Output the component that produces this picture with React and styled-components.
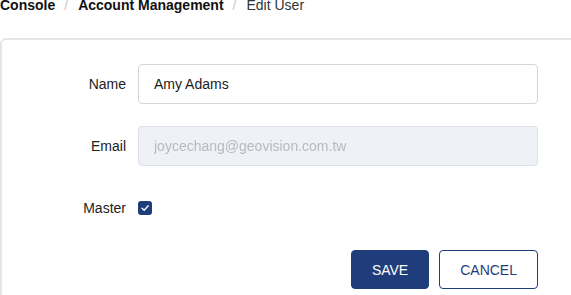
import React, { useState } from 'react';
import styled, { createGlobalStyle } from 'styled-components';

const GlobalStyle = createGlobalStyle`
	html, body {
		margin: 0;
		padding: 0;
		overflow: hidden;
		background: #fff;
	}
	body {
		font-family: 'Liberation Sans', Arial, sans-serif;
		color: #222;
	}
`;

const Page = styled.div`
	width: 571px;
	height: 295px;
	overflow: hidden;
`;

const Breadcrumb = styled.nav`
	display: flex;
	align-items: baseline;
	font-size: 14px;
	line-height: 16px;
	margin-top: -3px;
	height: 16px;
`;

const Crumb = styled.span`
	font-weight: ${p => (p.$current ? 400 : 700)};
	color: ${p => (p.$current ? '#333' : '#111')};
`;

const Sep = styled.span`
	color: #c8c8c8;
	margin: 0 10px 0 9px;
`;

const Card = styled.section`
	margin-top: 25px;
	margin-right: -40px;
	border: 2px solid #e6e6e6;
	border-radius: 6px;
	padding: 24px 0 40px 0;
`;

const Form = styled.form`
	display: grid;
	grid-template-columns: 124px 400px;
	column-gap: 12px;
	row-gap: 22px;
	align-items: center;
`;

const Label = styled.label`
	font-size: 14px;
	color: #222;
	text-align: right;
`;

const Input = styled.input`
	box-sizing: border-box;
	height: 40px;
	width: 100%;
	padding: 0 15px;
	font: 14px 'Liberation Sans', Arial, sans-serif;
	color: #1a1a1a;
	border: 1px solid ${p => (p.disabled ? '#dcdfe6' : '#d2d5dc')};
	border-radius: 4px;
	background: ${p => (p.disabled ? '#eef1f6' : '#fff')};
	outline: none;
	&:disabled {
		color: #b6bac2;
		-webkit-text-fill-color: #b6bac2;
		filter: blur(0.3px);
	}
`;

const CheckCell = styled.div`
	height: 40px;
	display: flex;
	align-items: center;
`;

const Check = styled.span`
	width: 14px;
	height: 14px;
	border-radius: 3px;
	background: #1f3d7a;
	display: flex;
	align-items: center;
	justify-content: center;
	cursor: pointer;
`;

const Actions = styled.div`
	grid-column: 2;
	display: flex;
	justify-content: flex-end;
	gap: 10px;
`;

const Button = styled.button`
	box-sizing: border-box;
	height: 39px;
	padding: 0 20px;
	border-radius: 4px;
	border: 1px solid #1f3d7a;
	font: 14px 'Liberation Sans', Arial, sans-serif;
	background: ${p => (p.$primary ? '#1f3d7a' : '#fff')};
	color: ${p => (p.$primary ? '#fff' : '#1f3d7a')};
	cursor: pointer;
`;

export default function App() {
	const [master, setMaster] = useState(true);
	return (
		<Page>
			<GlobalStyle />
			<Breadcrumb>
				<Crumb>Console</Crumb>
				<Sep>/</Sep>
				<Crumb>Account Management</Crumb>
				<Sep>/</Sep>
				<Crumb $current>Edit User</Crumb>
			</Breadcrumb>
			<Card>
				<Form onSubmit={e => e.preventDefault()}>
					<Label>Name</Label>
					<Input defaultValue="Amy Adams" />
					<Label>Email</Label>
					<Input disabled value="joycechang@geovision.com.tw" readOnly />
					<Label>Master</Label>
					<CheckCell>
						<Check onClick={() => setMaster(!master)}>
							{master && (
								<svg width="10" height="10" viewBox="0 0 10 10">
									<path d="M2 5.2 L4.2 7.3 L8.2 2.8" fill="none" stroke="#fff" strokeWidth="1.3" strokeLinecap="round" strokeLinejoin="round" />
								</svg>
							)}
						</Check>
					</CheckCell>
					<Actions>
						<Button $primary>SAVE</Button>
						<Button type="button">CANCEL</Button>
					</Actions>
				</Form>
			</Card>
		</Page>
	);
}
